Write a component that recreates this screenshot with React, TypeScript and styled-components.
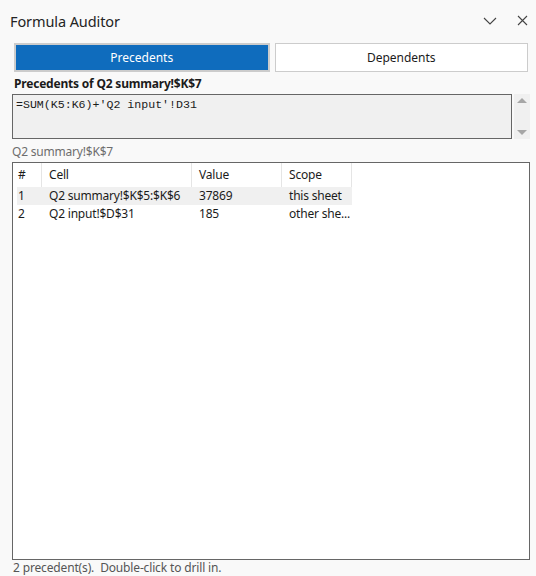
import React from "react";
import styled, { createGlobalStyle } from "styled-components";

const GlobalStyle = createGlobalStyle`
  html, body {
    margin: 0;
    padding: 0;
    background: #f9f9f9;
  }
  * {
    box-sizing: border-box;
  }
`;

const Pane = styled.div`
  width: 536px;
  height: 576px;
  display: flex;
  flex-direction: column;
  background: #f9f9f9;
  font-family: "Noto Sans", "Open Sans", sans-serif;
  font-size: 12px;
  color: #1b1b1b;
  overflow: hidden;
`;

const TitleBar = styled.div`
  height: 42px;
  display: flex;
  align-items: center;
  padding: 0 4px 0 10px;
`;

const Title = styled.h1`
  flex: 1;
  margin: 0;
  font-size: 14.5px;
  font-weight: 400;
  color: #242424;
  letter-spacing: -0.1px;
`;

const IconButton = styled.button`
  width: 20px;
  height: 24px;
  padding: 0;
  margin-left: 12px;
  border: none;
  background: transparent;
  display: flex;
  align-items: center;
  justify-content: center;
`;

const TabRow = styled.div`
  display: flex;
  gap: 5px;
  height: 29px;
  margin: 1px 8px 0 14px;
`;

const Tab = styled.button<{ $active?: boolean }>`
  flex: 1;
  margin: 0;
  padding: 0;
  font-family: inherit;
  font-size: 12px;
  border: ${p => (p.$active ? "2px solid #cccccc" : "1px solid #cccccc")};
  background: ${p => (p.$active ? "#0f6cbd" : "#ffffff")};
  color: ${p => (p.$active ? "#ffffff" : "#1b1b1b")};
`;

const SectionLabel = styled.div`
  margin: 4px 0 0 14px;
  height: 16px;
  font-weight: 700;
  font-size: 12px;
  line-height: 16px;
  letter-spacing: -0.2px;
`;

const FormulaRow = styled.div`
  display: flex;
  margin: 2px 6px 0 12px;
  height: 45px;
  gap: 2px;
`;

const FormulaBox = styled.div`
  flex: 1;
  border: 1px solid #666666;
  background: #f0f0f0;
  padding: 1px 3px;
  font-family: "Liberation Mono", "DejaVu Sans Mono", monospace;
  font-size: 11.6px;
  line-height: 17px;
  color: #1b1b1b;
`;

const ScrollBar = styled.div`
  width: 16px;
  background: #f0f0f0;
  display: flex;
  flex-direction: column;
  justify-content: space-between;
  align-items: center;
  padding: 4px 0 4px;
`;

const Arrow = styled.div<{ $down?: boolean }>`
  width: 0;
  height: 0;
  border-left: 5px solid transparent;
  border-right: 5px solid transparent;
  ${p =>
    p.$down
      ? "border-top: 5px solid #a6a6a6;"
      : "border-bottom: 5px solid #a6a6a6;"}
`;

const AddressLabel = styled.div`
  margin: 5px 0 0 12px;
  height: 16px;
  line-height: 16px;
  color: #6d6d6d;
  letter-spacing: -0.2px;
`;

const ListBox = styled.div`
  margin: 2px 6px 0 12px;
  height: 399px;
  border: 1px solid #666666;
  background: #ffffff;
`;

const GridRow = styled.div<{ $header?: boolean; $shaded?: boolean }>`
  display: grid;
  grid-template-columns: 29px 150px 90px 70px;
  width: 339px;
  height: ${p => (p.$header ? "24px" : "18px")};
  line-height: ${p => (p.$header ? "24px" : "18px")};
  background: ${p =>
    p.$shaded
      ? "linear-gradient(to right, transparent 4px, #f0f0f0 4px)"
      : "transparent"};
`;

const Cell = styled.div<{ $header?: boolean; $first?: boolean }>`
  padding-left: ${p => (p.$first ? "5px" : "7px")};
  white-space: nowrap;
  overflow: hidden;
  letter-spacing: -0.2px;
  border-right: ${p => (p.$header ? "1px solid #e5e5e5" : "none")};
`;

const Footer = styled.div`
  margin: 0 0 0 13px;
  height: 16px;
  line-height: 15px;
  color: #555555;
  letter-spacing: -0.15px;
`;

type Precedent = {
  cell: string;
  value: string;
  scope: string;
};

const rows: Precedent[] = [
  { cell: "Q2 summary!$K$5:$K$6", value: "37869", scope: "this sheet" },
  { cell: "Q2 input!$D$31", value: "185", scope: "other she..." }
];

const Chevron = () => (
  <svg width="14" height="8" viewBox="0 0 14 8">
    <path d="M1 1l6 6 6-6" fill="none" stroke="#444" strokeWidth="1.1" />
  </svg>
);

const Close = () => (
  <svg width="11" height="11" viewBox="0 0 11 11">
    <path d="M1 1l9 9M10 1l-9 9" fill="none" stroke="#444" strokeWidth="1.1" />
  </svg>
);

const App = () => (
  <>
    <GlobalStyle />
    <Pane>
      <TitleBar>
        <Title>Formula Auditor</Title>
        <IconButton aria-label="Options">
          <Chevron />
        </IconButton>
        <IconButton aria-label="Close">
          <Close />
        </IconButton>
      </TitleBar>
      <TabRow>
        <Tab $active>Precedents</Tab>
        <Tab>Dependents</Tab>
      </TabRow>
      <SectionLabel>Precedents of Q2 summary!$K$7</SectionLabel>
      <FormulaRow>
        <FormulaBox>=SUM(K5:K6)+'Q2 input'!D31</FormulaBox>
        <ScrollBar>
          <Arrow />
          <Arrow $down />
        </ScrollBar>
      </FormulaRow>
      <AddressLabel>Q2 summary!$K$7</AddressLabel>
      <ListBox>
        <GridRow $header>
          <Cell $header $first>#</Cell>
          <Cell $header>Cell</Cell>
          <Cell $header>Value</Cell>
          <Cell $header>Scope</Cell>
        </GridRow>
        {rows.map((r, i) => (
          <GridRow key={r.cell} $shaded={i === 0}>
            <Cell $first>{i + 1}</Cell>
            <Cell>{r.cell}</Cell>
            <Cell>{r.value}</Cell>
            <Cell>{r.scope}</Cell>
          </GridRow>
        ))}
      </ListBox>
      <Footer>2 precedent(s).&nbsp; Double-click to drill in.</Footer>
    </Pane>
  </>
);

export default App;
